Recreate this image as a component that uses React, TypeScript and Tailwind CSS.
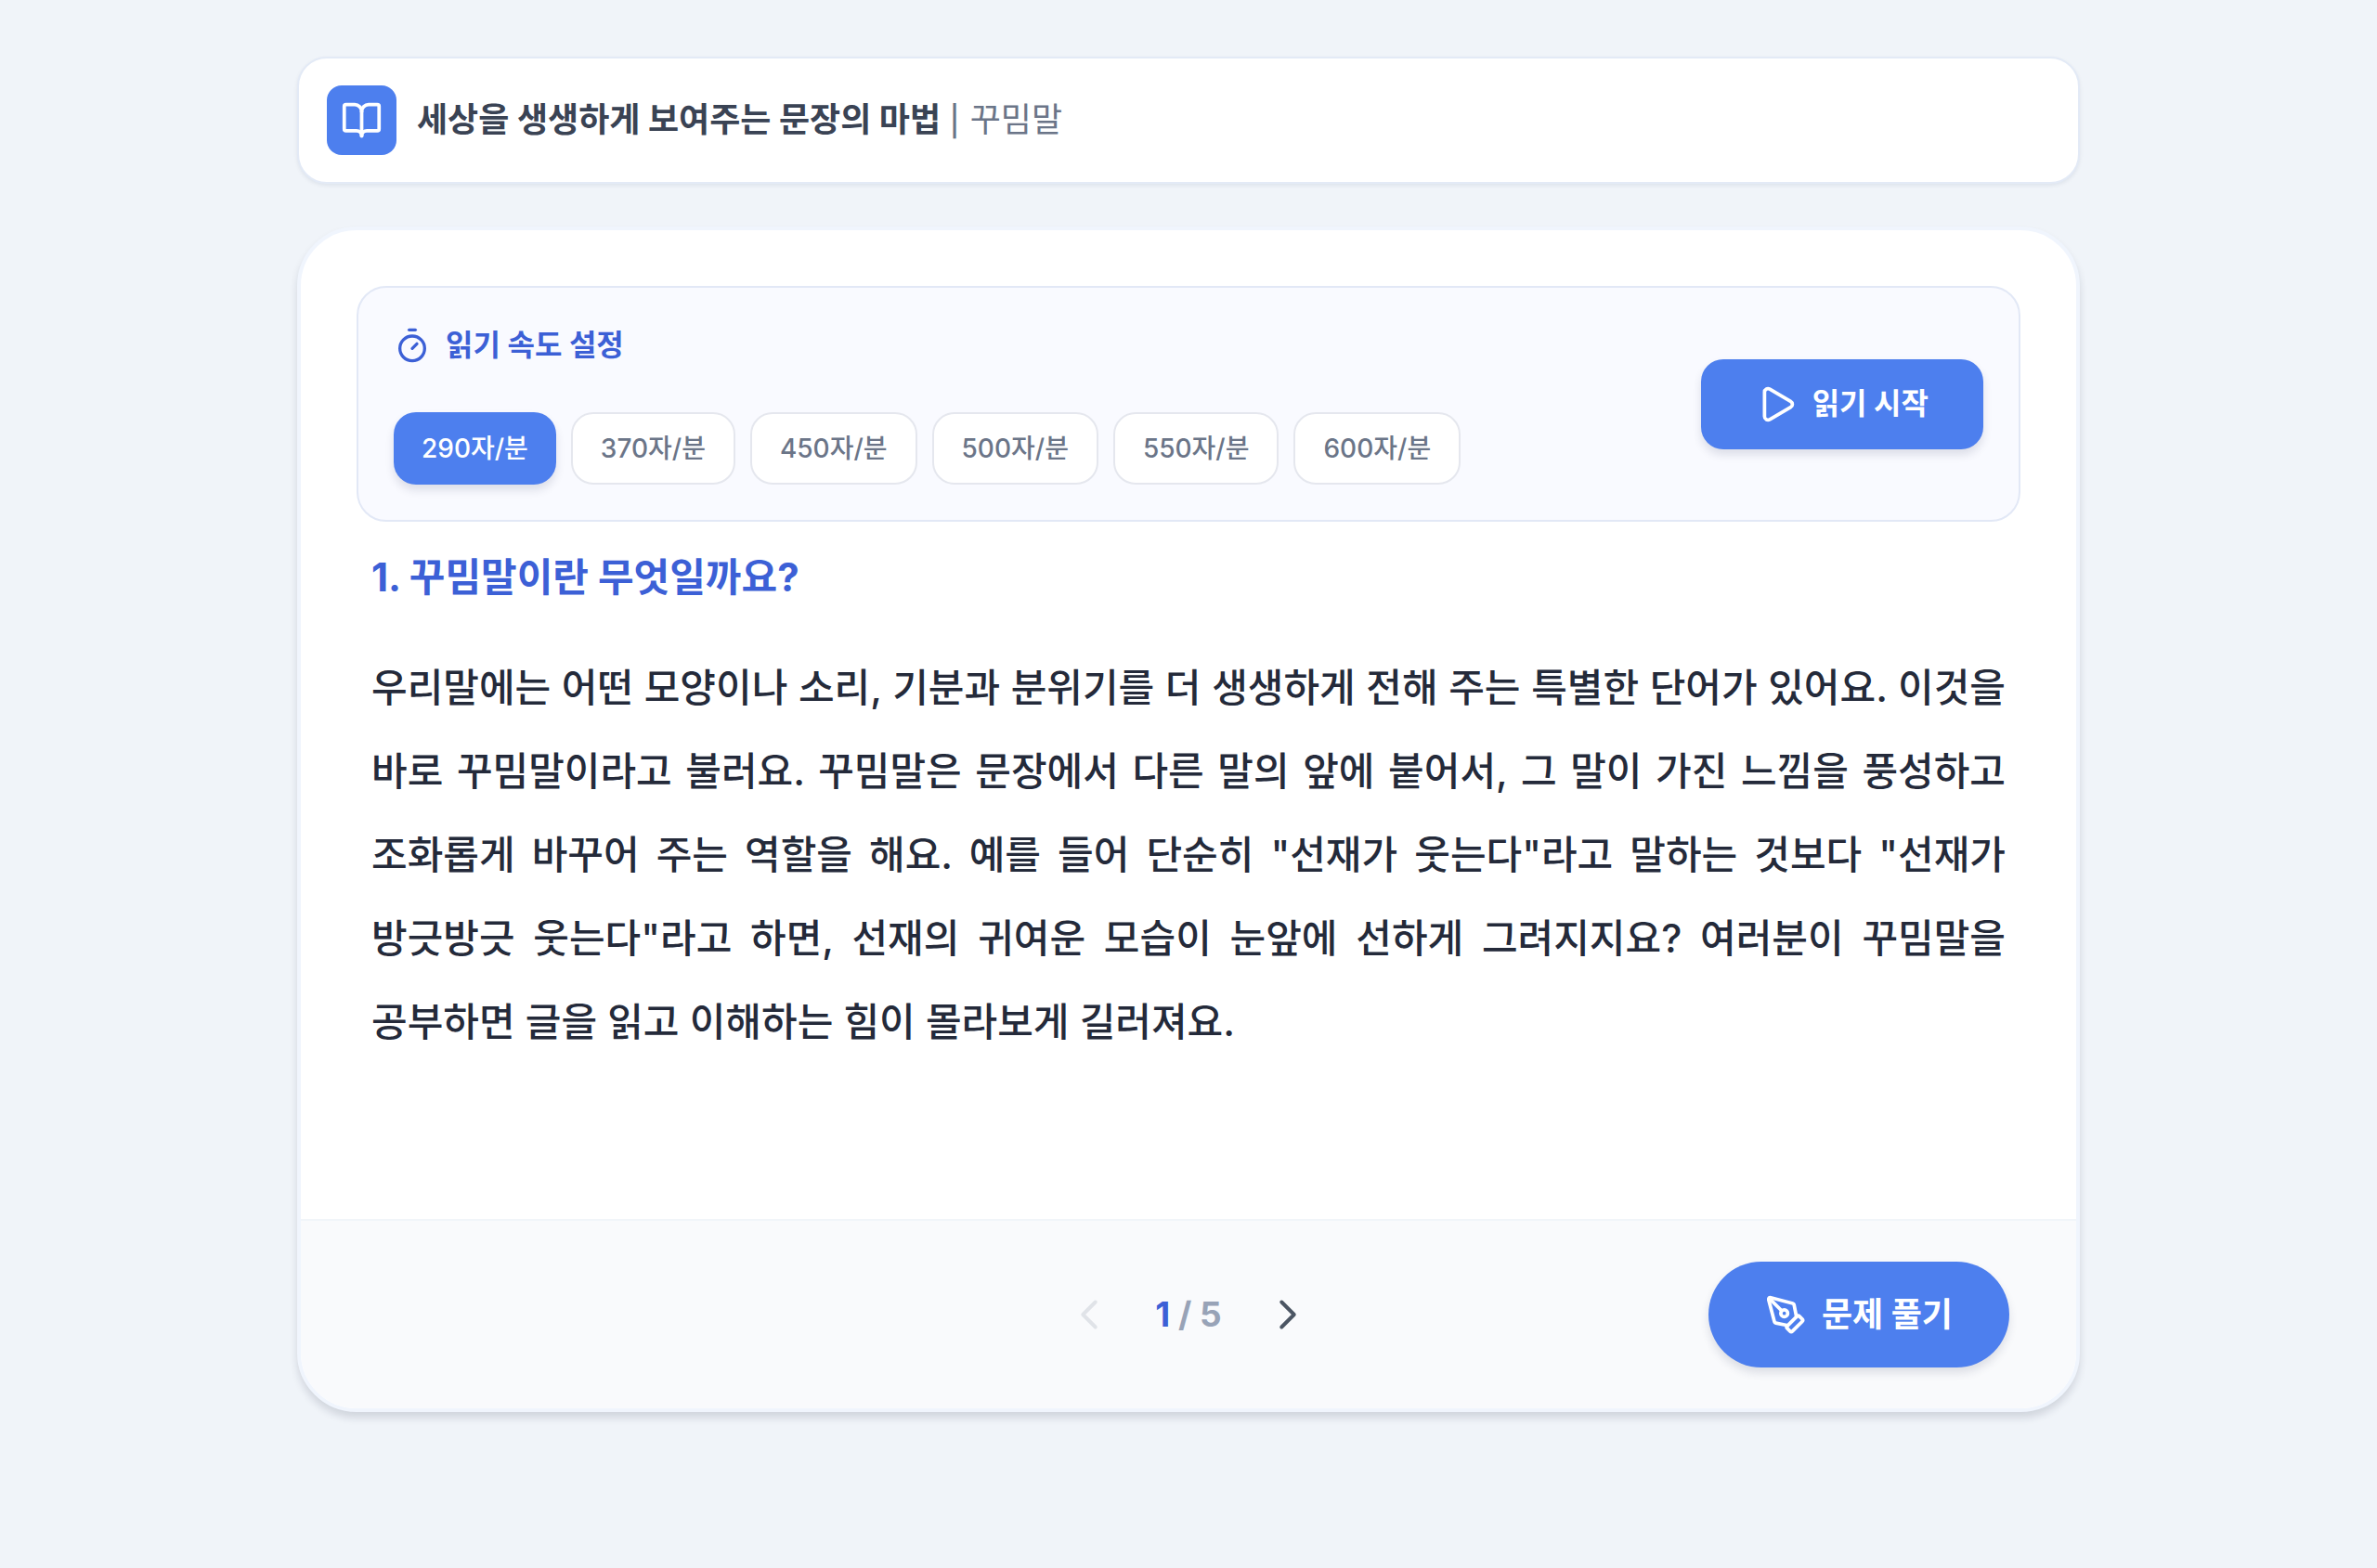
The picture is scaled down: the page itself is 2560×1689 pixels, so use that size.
import { useState } from "react";
import { BookOpen, ChevronLeft, ChevronRight, PenTool, Play, Timer } from "lucide-react";

const SPEEDS = [290, 370, 450, 500, 550, 600];
const TOTAL_PAGES = 5;

function Header() {
  return (
    <header className="flex items-center gap-[22px] rounded-[32px] border-2 border-[#e3eaf6] bg-white px-[30px] py-[29px] shadow-[0_2px_4px_rgba(15,40,80,0.08)]">
      <span className="flex size-[75px] shrink-0 items-center justify-center rounded-[16px] bg-[#4d7fee] text-white">
        <BookOpen size={45} strokeWidth={2} aria-hidden="true" />
      </span>
      <h1 className="text-[36px] leading-[48px] font-bold text-[#3a4354]">
        세상을 생생하게 보여주는 문장의 마법{" "}
        <span className="font-normal text-[#6b7588]">
          <span className="mx-px text-[32px] font-medium">|</span> 꾸밈말
        </span>
      </h1>
    </header>
  );
}

function SpeedPanel() {
  const [speed, setSpeed] = useState(290);
  return (
    <section
      aria-labelledby="speed-title"
      className="flex items-center justify-between gap-8 rounded-[32px] border-2 border-[#e2e8f6] bg-[#f9faff] px-[38px] py-[38px]"
    >
      <div className="flex flex-col gap-[48px]">
        <h2
          id="speed-title"
          className="flex items-center gap-4 text-[32px] leading-[48px] font-bold text-[#3c60d6]"
        >
          <Timer size={40} strokeWidth={2} aria-hidden="true" />
          읽기 속도 설정
        </h2>
        <div className="flex flex-wrap gap-4">
          {SPEEDS.map((value) => (
            <button
              key={value}
              type="button"
              aria-pressed={value === speed}
              onClick={() => setSpeed(value)}
              className={
                value === speed
                  ? "h-[78px] rounded-[24px] bg-[#4d7fee] px-[30px] text-[28px] leading-[40px] font-medium text-white shadow-[0_6px_10px_rgba(30,40,80,0.13)]"
                  : "h-[78px] rounded-[24px] border-2 border-[#e5e7ee] bg-white px-[30px] text-[28px] leading-[40px] font-medium text-[#6b7588]"
              }
            >
              {value}자/분
            </button>
          ))}
        </div>
      </div>
      <button
        type="button"
        className="flex h-[97px] shrink-0 items-center gap-4 rounded-[24px] bg-[#4d7fee] px-[59px] text-[32px] leading-[48px] font-bold text-white shadow-[0_6px_10px_rgba(30,40,80,0.13)]"
      >
        <Play size={45} strokeWidth={2} aria-hidden="true" />
        읽기 시작
      </button>
    </section>
  );
}

function Passage() {
  return (
    <article className="px-4 pt-[28px] pb-[167px]">
      <h2 className="mb-[42px] text-[42px] leading-[64px] font-bold text-[#3c60d6]">
        1. 꾸밈말이란 무엇일까요?
      </h2>
      <p className="text-justify text-[42px] leading-[90px] font-medium break-keep text-[#242a3a]">
        우리말에는 어떤 모양이나 소리, 기분과 분위기를 더 생생하게 전해 주는 특별한 단어가
        있어요. 이것을 바로 꾸밈말이라고 불러요. 꾸밈말은 문장에서 다른 말의 앞에 붙어서, 그
        말이 가진 느낌을 풍성하고 조화롭게 바꾸어 주는 역할을 해요. 예를 들어 단순히
        "선재가 웃는다"라고 말하는 것보다 "선재가 방긋방긋 웃는다"라고 하면, 선재의 귀여운
        모습이 눈앞에 선하게 그려지지요? 여러분이 꾸밈말을 공부하면 글을 읽고 이해하는 힘이
        몰라보게 길러져요.
      </p>
    </article>
  );
}

function Footer() {
  const [page, setPage] = useState(1);
  return (
    <footer className="grid grid-cols-[1fr_auto_1fr] items-center border-t-2 border-[#f1f5f9] bg-[#f9fafc] px-[72px] py-[44px]">
      <nav aria-label="페이지" className="col-start-2 flex items-center gap-[44px]">
        <button
          type="button"
          aria-label="이전 페이지"
          disabled={page === 1}
          onClick={() => setPage(page - 1)}
          className="text-[#4b5563] disabled:text-[#e0e3e8]"
        >
          <ChevronLeft size={54} strokeWidth={1.75} aria-hidden="true" />
        </button>
        <span className="text-[37px] leading-[48px] font-bold text-[#98a3b7]">
          <span className="text-[#3c60d6]">{page}</span> / {TOTAL_PAGES}
        </span>
        <button
          type="button"
          aria-label="다음 페이지"
          disabled={page === TOTAL_PAGES}
          onClick={() => setPage(page + 1)}
          className="text-[#4b5563] disabled:text-[#e0e3e8]"
        >
          <ChevronRight size={54} strokeWidth={1.75} aria-hidden="true" />
        </button>
      </nav>
      <button
        type="button"
        className="flex h-[114px] items-center gap-4 justify-self-end rounded-full bg-[#4d7fee] px-[61px] text-[36px] leading-[48px] font-bold text-white shadow-[0_6px_10px_rgba(30,40,80,0.13)]"
      >
        <PenTool size={45} strokeWidth={2} aria-hidden="true" />
        문제 풀기
      </button>
    </footer>
  );
}

export default function App() {
  return (
    <div className="min-h-screen bg-[#f0f4f9] px-8 pt-[61px] pb-16 font-[Inter,'Noto_Sans_CJK_KR',sans-serif]">
      <div className="mx-auto flex max-w-[1920px] flex-col gap-[46px]">
        <Header />
        <main className="overflow-hidden rounded-[64px] border-4 border-[#f0f5fd] bg-white shadow-[0_6px_8px_rgba(20,30,60,0.14)]">
          <div className="px-[60px] pt-[60px]">
            <SpeedPanel />
            <Passage />
          </div>
          <Footer />
        </main>
      </div>
    </div>
  );
}
